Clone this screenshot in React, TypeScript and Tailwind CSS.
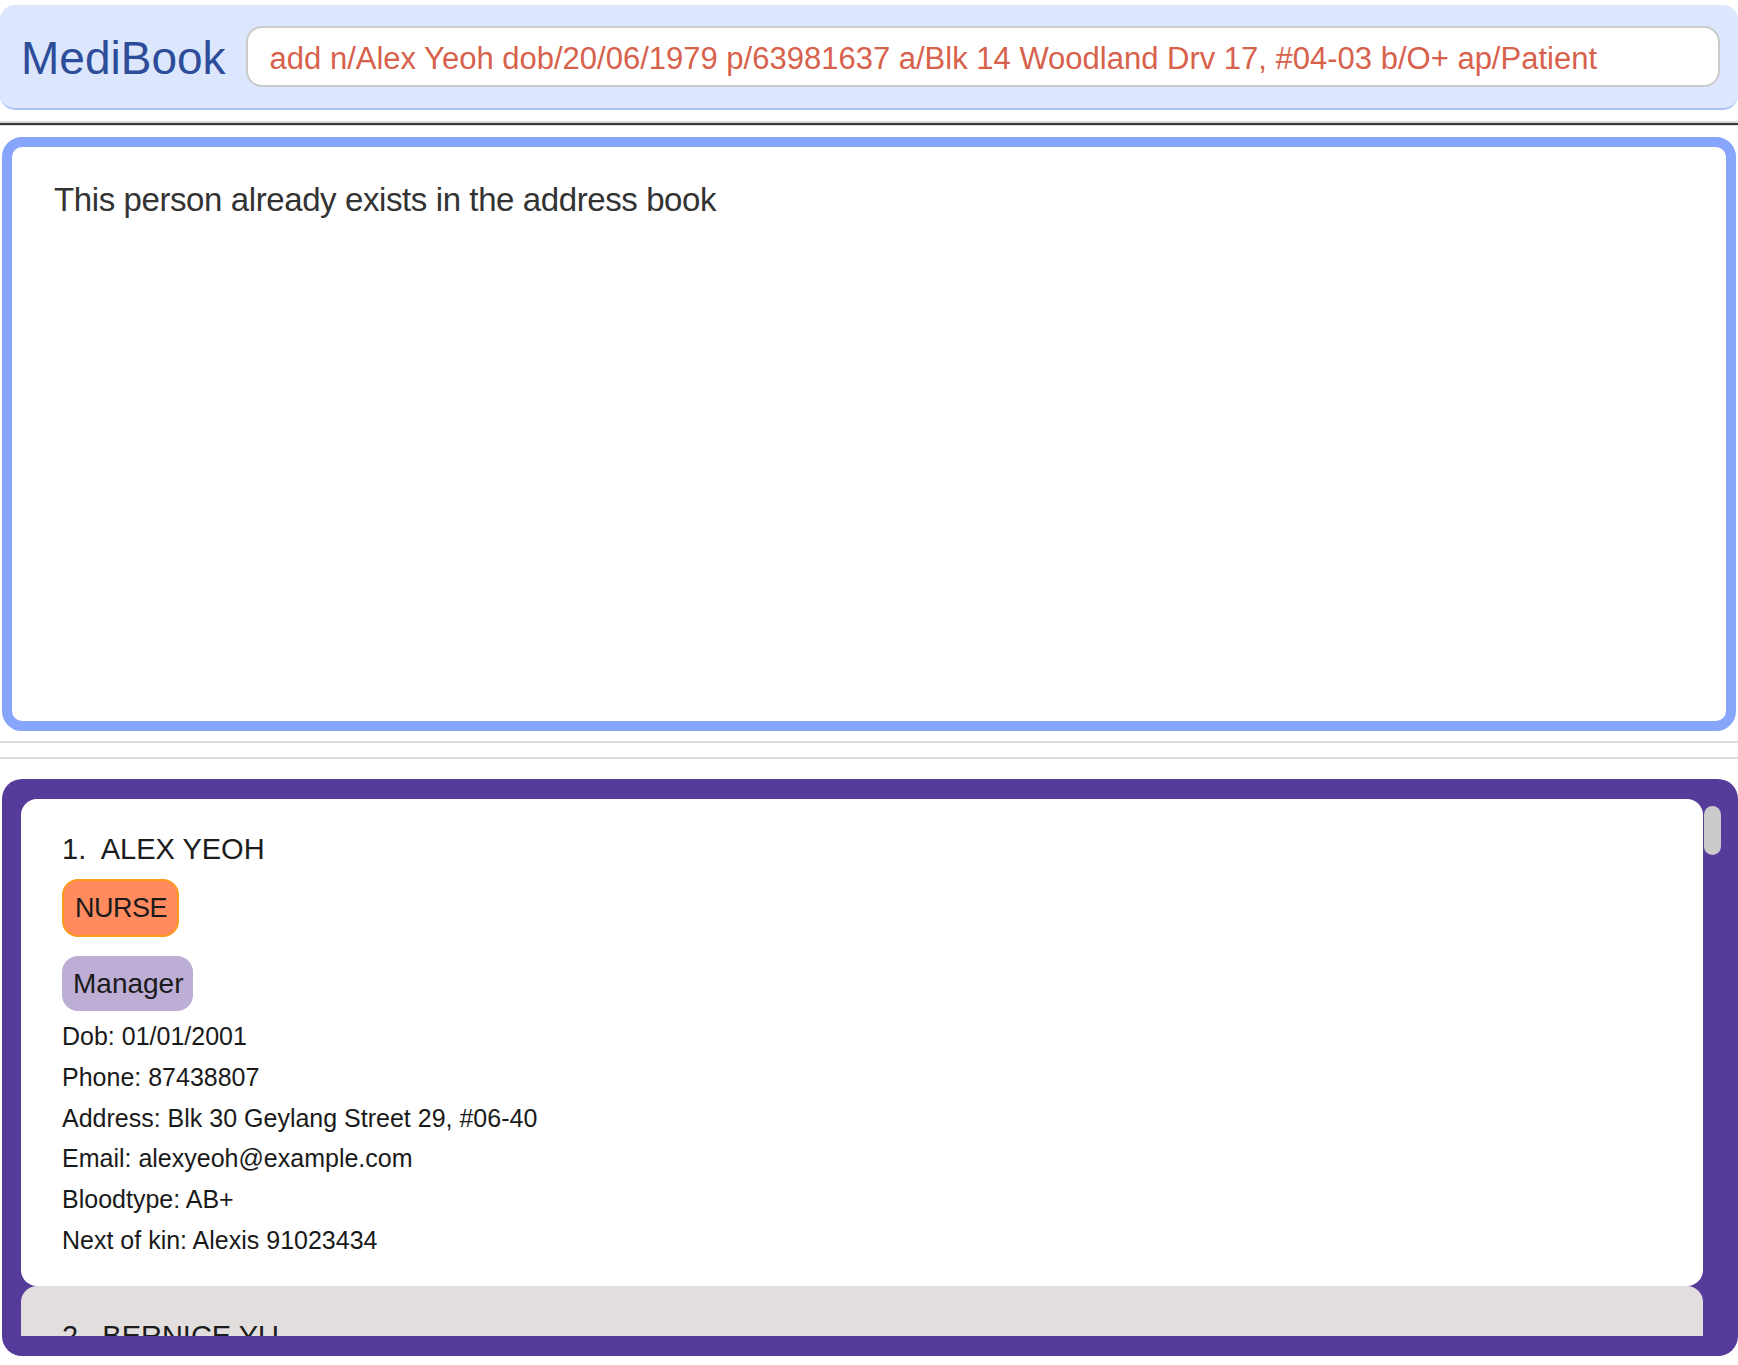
import React from "react";

const details = [
  "Dob: 01/01/2001",
  "Phone: 87438807",
  "Address: Blk 30 Geylang Street 29, #06-40",
  "Email: alexyeoh@example.com",
  "Bloodtype: AB+",
  "Next of kin: Alexis 91023434",
];

export default function App() {
  return (
    <div className="w-full h-[1365px] bg-white flex flex-col overflow-hidden font-['Liberation_Sans',Arial,sans-serif]">
      <header className="mt-[5px] h-[105px] shrink-0 rounded-[15px] bg-[#dce6fd] border-b-2 border-[#a9c3f8] flex items-center pl-[21px] pr-[18px]">
        <h1 className="text-[46px] leading-none text-[#2d4d9a] whitespace-nowrap pt-[2px]">MediBook</h1>
        <div className="ml-[20px] flex-1 h-[61px] rounded-[16px] border-2 border-[#cacaca] bg-white flex items-center pl-[22px] pt-[4px] overflow-hidden">
          <span className="text-[31px] leading-none text-[#d7614b] whitespace-nowrap">
            add n/Alex Yeoh dob/20/06/1979 p/63981637 a/Blk 14 Woodland Drv 17, #04-03 b/O+ ap/Patient
          </span>
        </div>
      </header>

      <div className="mt-[11px] h-[2px] shrink-0 bg-[#d9d9d9]" />
      <div className="h-[2px] shrink-0 bg-[#3a3a3a]" />
      <div className="h-[1px] shrink-0 bg-[#dddddd]" />

      <div className="mt-[11px] mx-[2px] h-[594px] shrink-0 rounded-[20px] border-[10px] border-[#86a5fb] bg-white pl-[42px] pt-[33px]">
        <p className="text-[33px] leading-[40px] tracking-[-0.4px] text-[#333333]">
          This person already exists in the address book
        </p>
      </div>

      <div className="mt-[10px] h-[2px] shrink-0 bg-[#dcdcdc]" />
      <div className="mt-[14px] h-[2px] shrink-0 bg-[#dcdcdc]" />

      <div className="mt-[20px] ml-[2px] h-[577px] shrink-0 rounded-[20px] bg-[#553c9a] pt-[20px] pb-[20px] pl-[19px] pr-[17px] flex">
        <div className="flex-1 h-full overflow-hidden flex flex-col">
          <div className="shrink-0 bg-white rounded-[16px] pl-[41px] pt-[32px] pb-[25px] flex flex-col items-start">
            <div className="text-[29px] leading-[36px] text-[#1c1c1c] whitespace-pre">1.  ALEX YEOH</div>
            <div className="mt-[12px] h-[58px] rounded-[16px] border-2 border-[#ff9a1f] bg-[#ff8b5f] pl-[11px] pr-[10px] flex items-center">
              <span className="text-[27px] leading-none tracking-[-0.5px] text-[#1a1a1a]">NURSE</span>
            </div>
            <div className="mt-[19px] h-[55px] rounded-[16px] bg-[#bcaed4] pl-[11px] pr-[9px] flex items-center">
              <span className="text-[28px] leading-none text-[#1a1a1a]">Manager</span>
            </div>
            <div className="mt-[5px] flex flex-col">
              {details.map((d) => (
                <div key={d} className="text-[25px] leading-[40.8px] text-[#1a1a1a] whitespace-nowrap">
                  {d}
                </div>
              ))}
            </div>
          </div>
          <div className="shrink-0 bg-[#e3dede] rounded-[16px] pl-[41px] pt-[32px] pb-[25px] flex flex-col items-start">
            <div className="text-[29px] leading-[36px] text-[#1c1c1c] whitespace-pre">2.  BERNICE YU</div>
            <div className="h-[200px]" />
          </div>
        </div>
        <div className="w-[18px] h-full pt-[7px] flex flex-col items-center">
          <div className="h-[49px] w-[17px] rounded-full bg-[#cbcbcb]" />
        </div>
      </div>
    </div>
  );
}
